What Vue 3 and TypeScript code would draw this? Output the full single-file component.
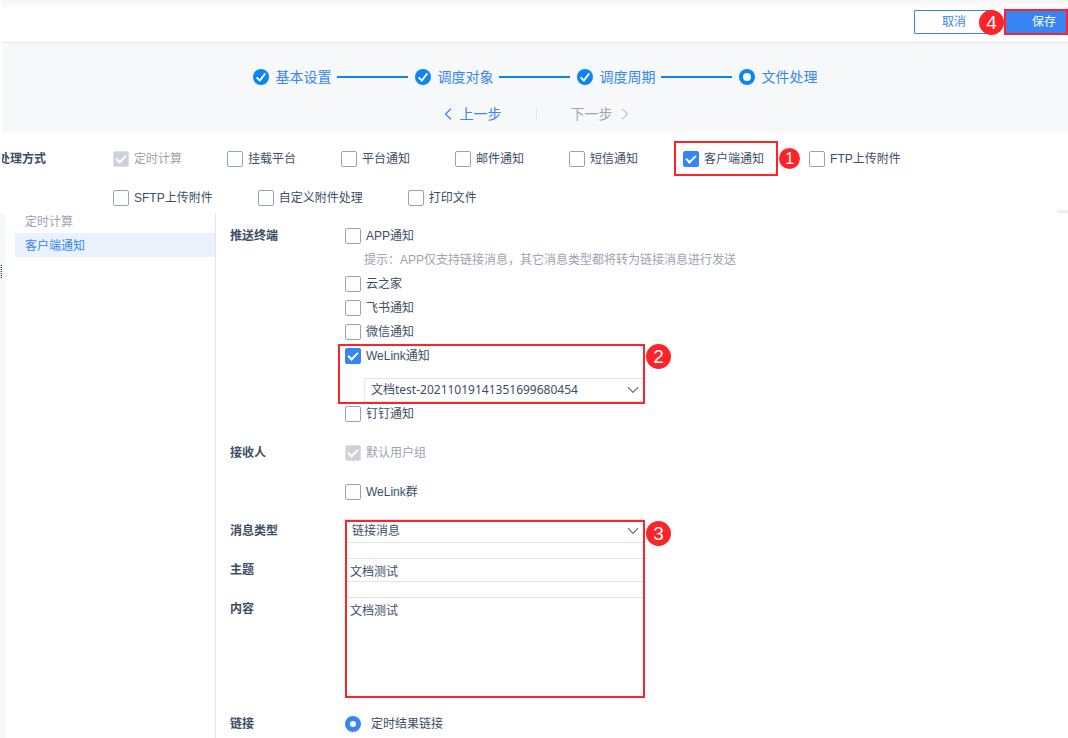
<script setup lang="ts">
import { ref } from 'vue'

interface Choice {
  id: string
  label: string
  checked: boolean
  disabled?: boolean
  mark?: string
}

const steps = [
  { title: '基本设置', done: true },
  { title: '调度对象', done: true },
  { title: '调度周期', done: true },
  { title: '文件处理', done: false },
]

const methods = ref<Choice[]>([
  { id: 'calc', label: '定时计算', checked: true, disabled: true },
  { id: 'mount', label: '挂载平台', checked: false },
  { id: 'platform', label: '平台通知', checked: false },
  { id: 'mail', label: '邮件通知', checked: false },
  { id: 'sms', label: '短信通知', checked: false },
  { id: 'client', label: '客户端通知', checked: true, mark: '1' },
  { id: 'ftp', label: 'FTP上传附件', checked: false },
  { id: 'sftp', label: 'SFTP上传附件', checked: false },
  { id: 'custom', label: '自定义附件处理', checked: false },
  { id: 'print', label: '打印文件', checked: false },
])

const app = ref(false)
const terminals = ref<Choice[]>([
  { id: 'cloud', label: '云之家', checked: false },
  { id: 'feishu', label: '飞书通知', checked: false },
  { id: 'wechat', label: '微信通知', checked: false },
])
const welink = ref(true)
const ding = ref(false)
const group = ref(false)
const document = ref('文档test-20211019141351699680454')
const messageType = ref('链接消息')
const subject = ref('文档测试')
const content = ref('文档测试')
const link = ref('result')
</script>

<template>
  <div class="page">
    <header class="toolbar">
      <button type="button" class="btn cancel">取消</button>
      <button type="button" class="btn save">保存</button>
      <span class="badge badge-save">4</span>
    </header>

    <section class="wizard">
      <ol class="steps">
        <li v-for="step in steps" :key="step.title" class="step">
          <svg class="step-icon" viewBox="0 0 16 16" aria-hidden="true">
            <circle cx="8" cy="8" r="8" fill="#0a85f5" />
            <path v-if="step.done" d="M3.6 8.4 6.8 11.5 12.3 4.4" fill="none" stroke="#fff" stroke-width="1.9" />
            <circle v-else cx="8" cy="8" r="4" fill="#fff" />
          </svg>
          <span>{{ step.title }}</span>
        </li>
      </ol>
      <nav class="pager">
        <button type="button" class="prev">
          <svg viewBox="0 0 8 12" aria-hidden="true"><path d="M7 .8 1.5 6 7 11.2" /></svg>上一步
        </button>
        <span class="divider"></span>
        <button type="button" class="next" disabled>
          下一步<svg viewBox="0 0 8 12" aria-hidden="true"><path d="M1 .8 6.5 6 1 11.2" /></svg>
        </button>
      </nav>
    </section>

    <section class="methods">
      <h2 class="methods-title">处理方式</h2>
      <div class="method-list">
        <label v-for="m in methods" :key="m.id" class="check" :class="{ off: m.disabled }">
          <input v-model="m.checked" type="checkbox" :disabled="m.disabled" />
          <span>{{ m.label }}</span>
          <template v-if="m.mark">
            <i class="frame frame-method"></i>
            <span class="badge badge-method">{{ m.mark }}</span>
          </template>
        </label>
      </div>
      <i class="edge"></i>
    </section>

    <main class="body">
      <div class="rail">
        <svg class="grip" viewBox="0 0 2 14" aria-hidden="true">
          <path d="M.5 1V14" stroke="#b4b8bf" stroke-dasharray="1 1" />
          <path d="M1.5 1V14" stroke="#33373e" stroke-dasharray="1 1" />
        </svg>
      </div>
      <ul class="side">
        <li><a href="#calc" class="muted">定时计算</a></li>
        <li class="active"><a href="#client">客户端通知</a></li>
      </ul>

      <form class="form" @submit.prevent>
        <div class="row">
          <span class="name">推送终端</span>
          <div class="field">
            <label class="check line"><input v-model="app" type="checkbox" /><span>APP通知</span></label>
            <p class="hint">提示：APP仅支持链接消息，其它消息类型都将转为链接消息进行发送</p>
            <label v-for="t in terminals" :key="t.id" class="check line">
              <input v-model="t.checked" type="checkbox" /><span>{{ t.label }}</span>
            </label>
            <div class="welink">
              <label class="check line"><input v-model="welink" type="checkbox" /><span>WeLink通知</span></label>
              <div class="select doc">
                <select v-model="document" aria-label="WeLink文档">
                  <option>文档test-20211019141351699680454</option>
                </select>
                <svg viewBox="0 0 12 8" aria-hidden="true"><path d="M1 1.2 6 6.5 11 1.2" /></svg>
              </div>
              <i class="frame frame-welink"></i>
              <span class="badge badge-welink">2</span>
            </div>
            <label class="check line"><input v-model="ding" type="checkbox" /><span>钉钉通知</span></label>
          </div>
        </div>

        <div class="row">
          <span class="name">接收人</span>
          <div class="field receivers">
            <label class="check line off"><input type="checkbox" checked disabled /><span>默认用户组</span></label>
            <label class="check line"><input v-model="group" type="checkbox" /><span>WeLink群</span></label>
          </div>
        </div>

        <div class="message">
          <div class="row">
            <label class="name" for="type">消息类型</label>
            <div class="field">
              <div class="select">
                <select id="type" v-model="messageType">
                  <option>链接消息</option>
                </select>
                <svg viewBox="0 0 12 8" aria-hidden="true"><path d="M1 1.2 6 6.5 11 1.2" /></svg>
              </div>
            </div>
          </div>
          <div class="row">
            <label class="name" for="subject">主题</label>
            <div class="field"><input id="subject" v-model="subject" class="text" type="text" /></div>
          </div>
          <div class="row">
            <label class="name" for="content">内容</label>
            <div class="field"><textarea id="content" v-model="content" class="text area"></textarea></div>
          </div>
          <i class="frame frame-message"></i>
          <span class="badge badge-message">3</span>
        </div>

        <div class="row">
          <span class="name">链接</span>
          <div class="field">
            <label class="check line radio">
              <input v-model="link" type="radio" name="link" value="result" /><span>定时结果链接</span>
            </label>
          </div>
        </div>
      </form>
    </main>
  </div>
</template>

<style>
body {
  background: #fff;
}
</style>

<style scoped>
.page,
.page * {
  box-sizing: border-box;
}

.page {
  display: flex;
  flex-direction: column;
  min-height: 100vh;
  overflow: hidden;
  color: #3d4d66;
  font: 12px/16px "Liberation Sans", "Noto Sans CJK SC", sans-serif;
}

button,
input,
select,
textarea {
  margin: 0;
  color: inherit;
  font: inherit;
}

.toolbar {
  position: relative;
  display: flex;
  justify-content: flex-end;
  align-items: center;
  gap: 10px;
  height: 43px;
  margin-left: 2px;
  padding-top: 2px;
  border-bottom: 1px solid #e3e5e8;
  background: linear-gradient(#f5f5f5, #fff 9px);
}

.btn {
  height: 24px;
  border: 1px solid #3685f2;
  border-radius: 1px;
  background: #fff;
  color: #3685f2;
}

.cancel {
  width: 80px;
}

.save {
  width: 64px;
  height: 26px;
  padding: 0 0 0 16px;
  border: 2px solid #fd2329;
  border-radius: 0;
  background: #3685f2;
  color: #fff;
}

.wizard {
  height: 89px;
  margin-left: 2px;
  padding-top: 24px;
  background: #f7f8fa;
  color: #3685f2;
  font-size: 14px;
  line-height: 20px;
}

.steps {
  display: flex;
  justify-content: center;
  margin: 0;
  padding: 0;
  list-style: none;
}

.step {
  display: flex;
  align-items: center;
  gap: 7px;
}

.step:not(:last-child)::after {
  width: 71px;
  height: 2px;
  margin: 0 7px 0 -2px;
  background: #0a85f5;
  content: "";
}

.step-icon {
  width: 16px;
  height: 16px;
}

.pager {
  display: flex;
  justify-content: center;
  align-items: center;
  gap: 34px;
  margin-top: 17px;
  padding-left: 2px;
}

.pager button {
  display: flex;
  align-items: center;
  gap: 8px;
  padding: 0;
  border: 0;
  background: none;
}

.pager svg {
  width: 8px;
  height: 12px;
  fill: none;
  stroke: currentColor;
  stroke-width: 1.2;
}

.pager .next {
  color: #9ba3b0;
}

.pager .next svg {
  color: #c4c9d1;
}

.divider {
  width: 1px;
  height: 12px;
  background: #e3e5e8;
}

.methods {
  position: relative;
  display: flex;
  height: 81px;
  margin-left: 2px;
  padding: 19px 40px 0 0;
  overflow: hidden;
}

.methods-title {
  flex: none;
  width: 115px;
  margin: 0 0 0 -4px;
  font-size: 12px;
  line-height: 16px;
}

.method-list {
  display: flex;
  flex-wrap: wrap;
  align-content: flex-start;
  gap: 23px 45px;
}

.edge {
  position: absolute;
  right: 0;
  bottom: 0;
  width: 11px;
  height: 3px;
  background: #eeeff0;
}

.check {
  position: relative;
  display: flex;
  align-items: center;
  gap: 5px;
  height: 16px;
  white-space: nowrap;
}

.line {
  height: 24px;
}

.check.off {
  color: #9ba3b0;
}

.check input {
  display: grid;
  flex: none;
  place-content: center;
  width: 16px;
  height: 16px;
  border: 1px solid #98a2b2;
  border-radius: 2px;
  background: #fff;
  appearance: none;
}

.check input[type="checkbox"]:checked {
  border-color: #3685f2;
  background: #3685f2;
}

.check input[type="checkbox"]:checked:disabled {
  border-color: #dcdfe4;
  background: #cdd1d8;
}

.check input[type="checkbox"]:checked::after {
  width: 10px;
  height: 6px;
  margin-bottom: 3px;
  border: solid #fff;
  border-width: 0 0 2px 2px;
  box-sizing: border-box;
  transform: rotate(-45deg);
  content: "";
}

.check input[type="radio"] {
  border: 5px solid #3685f2;
  border-radius: 50%;
}

.radio {
  gap: 10px;
}

.body {
  display: flex;
  flex: 1;
}

.rail {
  flex: none;
  width: 5px;
  margin-right: 10px;
  padding-top: 51px;
  background: #f7f8fa;
}

.grip {
  display: block;
  width: 2px;
  height: 14px;
}

.side {
  flex: none;
  width: 201px;
  margin: 0;
  padding: 0;
  border-right: 1px solid #e3e5e8;
  list-style: none;
}

.side a {
  display: block;
  padding: 5px 10px 3px;
  color: #3685f2;
  text-decoration: none;
}

.side .muted {
  padding-top: 1px;
  color: #9ba3b0;
}

.side .active {
  background: #eaf2fe;
}

.form {
  display: flex;
  flex: 1;
  flex-direction: column;
  gap: 15px;
  padding: 11px 14px 2px;
}

.row {
  display: flex;
}

.name {
  flex: none;
  width: 115px;
  font-weight: bold;
  line-height: 24px;
}

.field {
  width: 300px;
}

.hint {
  margin: 0;
  padding-left: 19px;
  color: #9ba3b0;
  line-height: 24px;
  white-space: nowrap;
}

.welink {
  position: relative;
}

.receivers {
  display: grid;
  gap: 15px;
}

.message {
  position: relative;
  display: flex;
  flex-direction: column;
  gap: 15px;
  width: 415px;
}

.select {
  position: relative;
}

.select select {
  display: block;
  width: 100%;
  height: 24px;
  padding: 0 24px 0 6px;
  border: 1px solid #e3e5e8;
  border-radius: 0;
  background: #fff;
  appearance: none;
}

.select svg {
  position: absolute;
  top: 8px;
  right: 6px;
  width: 12px;
  height: 8px;
  fill: none;
  stroke: #5c6b82;
  stroke-width: 1.2;
  pointer-events: none;
}

.doc {
  margin: 10px 0 0 19px;
}

.doc select {
  font-family: "Noto Sans", "Noto Sans CJK SC", sans-serif;
}

.text {
  display: block;
  width: 100%;
  height: 24px;
  padding: 0 4px;
  border: 1px solid #e3e5e8;
  border-radius: 0;
  background: #fff;
}

.area {
  height: 100px;
  padding: 5px 4px;
  resize: none;
}

.frame {
  position: absolute;
  border: 2px solid #fd2329;
  pointer-events: none;
}

.badge {
  position: absolute;
  width: 25px;
  height: 25px;
  border-radius: 50%;
  background: #fd2329;
  color: #fff;
  font-size: 19px;
  line-height: 25px;
  text-align: center;
}

.frame-method {
  inset: -10px -14px -9px -9px;
}

.badge-method {
  top: -3px;
  left: 96px;
  width: 21px;
  height: 21px;
  font-size: 16px;
  line-height: 21px;
}

.frame-welink {
  inset: 0 0 -2px -7px;
}

.badge-welink {
  top: 0;
  left: 301px;
}

.frame-message {
  inset: 1px 0 -1px 115px;
}

.badge-message {
  top: 2px;
  left: 416px;
}

.badge-save {
  top: 10px;
  right: 64px;
}
</style>
